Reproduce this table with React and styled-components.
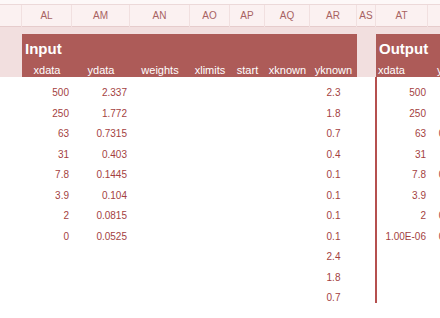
import React from "react";
import styled, { createGlobalStyle } from "styled-components";

const GlobalStyle = createGlobalStyle`
  body {
    margin: 0;
    background: #ffffff;
    overflow: hidden;
    font-family: "Liberation Sans", Arial, sans-serif;
  }
`;

const COLS = "22px 50px 58px 60px 40px 35px 45px 47px 19px 52px 60px";

const Sheet = styled.div`
  width: 488px;
`;

const TopStrip = styled.div`
  height: 4px;
  background: #fdf8f8;
  border-bottom: 1px solid #ecd9d9;
`;

const ColHeaders = styled.div`
  display: grid;
  grid-template-columns: ${COLS};
  height: 21px;
  background: #fbf1f1;
  border-bottom: 1px solid #e6cccc;
`;

const ColLetter = styled.div`
  font-size: 10px;
  line-height: 22px;
  text-align: center;
  color: #a86262;
  border-right: 1px solid #f1e0e0;
`;

const Band = styled.div`
  display: grid;
  grid-template-columns: ${COLS};
  height: 50px;
  padding-top: 7px;
  box-sizing: border-box;
  background: #f2dfdf;
`;

const Box = styled.div`
  grid-column: ${(p) => p.$span};
  background: #ad5b58;
  color: #ffffff;
  height: 43px;
`;

const Title = styled.div`
  height: 28px;
  line-height: 29px;
  padding-left: 3px;
  font-size: 15px;
  font-weight: bold;
`;

const Labels = styled.div`
  display: grid;
  grid-template-columns: ${(p) => p.$cols};
  height: 15px;
  line-height: 17px;
  font-size: 11px;
`;

const Label = styled.div`
  text-align: ${(p) => p.$align || "center"};
  padding-left: ${(p) => p.$pad || 0}px;
  white-space: nowrap;
`;

const Body = styled.div`
  display: grid;
  grid-template-columns: 22px 335px 19px 112px;
`;

const Table = styled.div`
  grid-column: ${(p) => p.$col};
  display: grid;
  grid-template-columns: ${(p) => p.$cols};
  grid-auto-rows: 20.5px;
  padding-top: 6px;
  align-content: start;
  ${(p) => (p.$divider ? "border-left: 2px solid #b5504f; height: 226px; box-sizing: border-box; margin-left: -1px;" : "")}
`;

const Cell = styled.div`
  grid-column: ${(p) => p.$c};
  grid-row: ${(p) => p.$r};
  font-size: 10px;
  line-height: 20.5px;
  color: #a43f3f;
  text-align: ${(p) => p.$align || "right"};
  padding: 0 3px;
  white-space: nowrap;
`;

const letters = ["", "AL", "AM", "AN", "AO", "AP", "AQ", "AR", "AS", "AT", "AU"];
const xdata = ["500", "250", "63", "31", "7.8", "3.9", "2", "0"];
const ydata = ["2.337", "1.772", "0.7315", "0.403", "0.1445", "0.104", "0.0815", "0.0525"];
const yknown = ["2.3", "1.8", "0.7", "0.4", "0.1", "0.1", "0.1", "0.1", "2.4", "1.8", "0.7"];
const outX = ["500", "250", "63", "31", "7.8", "3.9", "2", "1.00E-06"];
const outY = ["2.3371", "1.7719", "0.7314763", "0.40301", "0.1445124", "0.10398", "0.0815231", "0.0525412"];

export default function App() {
  return (
    <Sheet>
      <GlobalStyle />
      <TopStrip />
      <ColHeaders>
        {letters.map((l, i) => (
          <ColLetter key={i}>{l}</ColLetter>
        ))}
      </ColHeaders>
      <Band>
        <Box $span="2 / 9">
          <Title>Input</Title>
          <Labels $cols="50px 58px 60px 40px 35px 45px 47px">
            {["xdata", "ydata", "weights", "xlimits", "start", "xknown", "yknown"].map((t) => (
              <Label key={t}>{t}</Label>
            ))}
          </Labels>
        </Box>
        <Box $span="10 / 12">
          <Title>Output</Title>
          <Labels $cols="52px 60px">
            <Label $align="left" $pad={2}>xdata</Label>
            <Label $align="left" $pad={9}>ydata</Label>
          </Labels>
        </Box>
      </Band>
      <Body>
        <Table $col="2" $cols="50px 58px 60px 40px 35px 45px 47px">
          {xdata.map((v, i) => (
            <Cell key={"x" + i} $c={1} $r={i + 1}>{v}</Cell>
          ))}
          {ydata.map((v, i) => (
            <Cell key={"y" + i} $c={2} $r={i + 1}>{v}</Cell>
          ))}
          {yknown.map((v, i) => (
            <Cell key={"k" + i} $c={7} $r={i + 1} $align="center">{v}</Cell>
          ))}
        </Table>
        <Table $col="4" $cols="52px 60px" $divider>
          {outX.map((v, i) => (
            <Cell key={"ox" + i} $c={1} $r={i + 1}>{v}</Cell>
          ))}
          {outY.map((v, i) => (
            <Cell key={"oy" + i} $c={2} $r={i + 1}>{v}</Cell>
          ))}
        </Table>
      </Body>
    </Sheet>
  );
}
